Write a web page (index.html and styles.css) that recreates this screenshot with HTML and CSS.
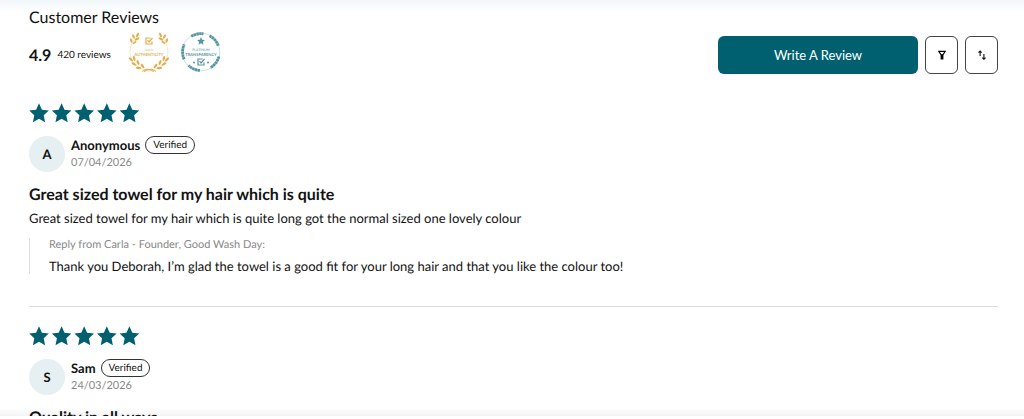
FILE: index.html
```html
<!DOCTYPE html>
<html lang="en">
<head>
    <meta charset="UTF-8">
    <meta name="viewport" content="width=device-width, initial-scale=1.0">
    <title>Customer Reviews</title>
    <link rel="stylesheet" href="styles.css">
</head>
<body>
    <!-- Shared shapes -->
    <svg class="shapes" aria-hidden="true">
        <symbol id="star" viewBox="0 0 20 20">
            <path d="M10 .3 12.9 6.7 19.8 7.5 14.7 12.3 16.1 19.2 10 15.8 3.9 19.2 5.3 12.3 .2 7.5 7.1 6.7Z"/>
        </symbol>
        <symbol id="stars" viewBox="0 0 111 20">
            <use href="#star" x="0" width="20" height="20"/>
            <use href="#star" x="22.6" width="20" height="20"/>
            <use href="#star" x="45.2" width="20" height="20"/>
            <use href="#star" x="67.8" width="20" height="20"/>
            <use href="#star" x="90.4" width="20" height="20"/>
        </symbol>
        <symbol id="laurel" viewBox="0 0 40 40">
            <path d="M5 8C-1 17 0 27 7 33Q12 38 25 39.500" fill="none" stroke="currentColor" stroke-width=".5" opacity=".6"/>
            <g fill="currentColor">
                <ellipse cx="8.500" cy="3" rx="2.600" ry="1.100" transform="rotate(-65 8.500 3)"/>
                <ellipse cx="4.500" cy="4.500" rx="2.400" ry="1.100" transform="rotate(65 4.500 4.500)"/>
                <ellipse cx="8" cy="7" rx="2.600" ry="1.200" transform="rotate(-25 8 7)"/>
                <ellipse cx="2.200" cy="8.500" rx="2.400" ry="1.100" transform="rotate(70 2.200 8.500)"/>
                <ellipse cx="5.500" cy="10.500" rx="2.200" ry="1" transform="rotate(-35 5.500 10.500)"/>
                <ellipse cx="2" cy="27.500" rx="2.600" ry="1.200" transform="rotate(45 2 27.500)"/>
                <ellipse cx="5.200" cy="26.500" rx="2.500" ry="1.200" transform="rotate(-105 5.200 26.500)"/>
                <ellipse cx="5" cy="32" rx="2.700" ry="1.200" transform="rotate(25 5 32)"/>
                <ellipse cx="9" cy="30.500" rx="2.600" ry="1.200" transform="rotate(-115 9 30.500)"/>
                <ellipse cx="9.500" cy="36" rx="2.700" ry="1.200" transform="rotate(5 9.500 36)"/>
                <ellipse cx="13.500" cy="34" rx="2.600" ry="1.200" transform="rotate(-130 13.500 34)"/>
            </g>
            <path d="M13 39.500Q17 36 21 37.500L25 39.500" fill="none" stroke="currentColor" stroke-width="1"/>
        </symbol>
        <symbol id="tick" viewBox="0 0 8 8">
            <path d="M5.500 1H1V7H7V4.500M2.500 3.200 4 5 7.500 1" fill="none" stroke="currentColor" stroke-width="1.200"/>
        </symbol>
    </svg>

    <main class="reviews">
        <h1 class="reviews-title">Customer Reviews</h1>

        <div class="summary">
            <strong class="score">4.9</strong>
            <span class="count">420 reviews</span>
            <svg class="badge badge-gold" viewBox="0 0 40 40" role="img" aria-label="Gold authenticity">
                <use href="#laurel" width="40" height="40"/>
                <use href="#laurel" width="40" height="40" transform="matrix(-1 0 0 1 40 0)"/>
                <use href="#tick" x="16" y="5" width="8" height="8"/>
                <text x="20" y="19" font-size="3">GOLD</text>
                <text class="badge-name" x="20" y="23.500" font-size="4">AUTHENTICITY</text>
            </svg>
            <svg class="badge badge-platinum" viewBox="0 0 40 40" role="img" aria-label="Platinum transparency">
                <circle cx="20" cy="20" r="18.800" fill="none" stroke="currentColor" stroke-width=".5" opacity=".6"/>
                <g fill="none" stroke="currentColor" stroke-width="2.800">
                    <path d="M10.200 4.400A18.400 18.400 0 0 1 22.500 1.800" stroke-dasharray="2.500 .3"/>
                    <path d="M28.500 3.700A18.400 18.400 0 0 1 37.300 13.700" stroke-dasharray="2.500 .3"/>
                    <path d="M37.900 24.500A18.400 18.400 0 0 1 29.500 35.700" stroke-dasharray="2.500 .3"/>
                    <path d="M19 38.400A18.400 18.400 0 0 1 7.500 33.500" stroke-dasharray="2.500 .3"/>
                    <path d="M3.100 27.400A18.400 18.400 0 0 1 3.300 12.300" stroke-dasharray="2.500 .3"/>
                </g>
                <use href="#star" x="16" y="5" width="8" height="8"/>
                <text x="20" y="18.500" font-size="3.500">PLATINUM</text>
                <text class="badge-name" x="20" y="23.500" font-size="4">TRANSPARENCY</text>
                <use href="#tick" x="16" y="26" width="8" height="8"/>
                <circle cx="13" cy="30.500" r="1"/>
                <circle cx="27" cy="30.500" r="1"/>
            </svg>
            <div class="actions">
                <button type="button" class="write-button">Write A Review</button>
                <button type="button" class="icon-button" aria-label="Filter reviews">
                    <svg class="icon" viewBox="0 0 10 10">
                        <path d="M.7.800H9.300L6.400 5.200V9.600H3.600V5.200ZM2.900 2.100 4.400 4.300H5.600L7.100 2.100Z" fill-rule="evenodd"/>
                    </svg>
                </button>
                <button type="button" class="icon-button" aria-label="Sort reviews">
                    <svg class="icon" viewBox="0 0 10 10">
                        <path d="M3.100 6V1.500M1.500 2.600 3.100 1 4.700 2.600M6.900 4V8.800M5.300 7.700 6.900 9.300 8.500 7.700" fill="none" stroke="currentColor" stroke-width="1.100"/>
                    </svg>
                </button>
            </div>
        </div>

        <!-- Review list -->
        <article class="review">
            <svg class="stars" role="img" aria-label="5 out of 5 stars"><use href="#stars"/></svg>
            <div class="author">
                <span class="avatar">A</span>
                <div>
                    <div class="author-line">
                        <strong class="author-name">Anonymous</strong>
                        <span class="verified">Verified</span>
                    </div>
                    <time class="date" datetime="2026-04-07">07/04/2026</time>
                </div>
            </div>
            <h2 class="review-title">Great sized towel for my hair which is quite</h2>
            <p class="review-text">Great sized towel for my hair which is quite long got the normal sized one lovely colour</p>
            <div class="reply">
                <p class="reply-from">Reply from Carla - Founder, Good Wash Day:</p>
                <p class="reply-text">Thank you Deborah, I’m glad the towel is a good fit for your long hair and that you like the colour too!</p>
            </div>
        </article>

        <article class="review">
            <svg class="stars" role="img" aria-label="5 out of 5 stars"><use href="#stars"/></svg>
            <div class="author">
                <span class="avatar">S</span>
                <div>
                    <div class="author-line">
                        <strong class="author-name">Sam</strong>
                        <span class="verified">Verified</span>
                    </div>
                    <time class="date" datetime="2026-03-24">24/03/2026</time>
                </div>
            </div>
            <h2 class="review-title">Quality in all ways</h2>
        </article>
    </main>
</body>
</html>
```
FILE: styles.css
```css
* {
    box-sizing: border-box;
}

body {
    margin: 0;
    overflow: hidden;
    font-family: Lato, sans-serif;
    font-size: 13px;
    text-rendering: geometricPrecision;
    color: #121212;
    background: #fff;
}

h1, h2, p {
    margin: 0;
}

.shapes {
    display: none;
}

.reviews {
    height: calc(100vh - 3px);
    padding: 8px 26px 0 29px;
    overflow: hidden;
    background:
        linear-gradient(#f0f7f9, #fff) top / 100% 12px no-repeat,
        linear-gradient(#fff, #f3f3f3) bottom / 100% 8px no-repeat;
}

.reviews-title {
    font-size: 16px;
    line-height: 20px;
    font-weight: 400;
}

/* Score, badges and buttons */
.summary {
    display: flex;
    align-items: center;
    height: 54px;
}

.score {
    font-size: 16px;
    margin-right: 6px;
}

.count {
    font-size: 10px;
    margin-right: 18px;
}

.badge {
    width: 40px;
    height: 40px;
    margin-right: 12px;
    margin-bottom: 6px;
    fill: currentColor;
}

.badge text {
    text-anchor: middle;
}

.badge-name {
    font-weight: 700;
}

.badge-gold {
    color: #e4ae4d;
}

.badge-platinum {
    color: #5696a2;
}

.actions {
    display: flex;
    flex: 1;
    justify-content: flex-end;
    gap: 7px;
}

.write-button, .icon-button {
    height: 38px;
    border-radius: 6px;
    font-family: inherit;
    cursor: pointer;
}

.write-button {
    width: 200px;
    border: none;
    background: #006070;
    color: #fff;
    font-size: 13px;
}

.icon-button {
    display: flex;
    align-items: center;
    justify-content: center;
    width: 33px;
    padding: 0;
    border: 1px solid #444;
    background: #fff;
    color: #121212;
}

.icon {
    width: 10px;
    height: 10px;
}

/* Reviews */
.review {
    padding-top: 21px;
}

.review + .review {
    margin-top: 32px;
    padding-top: 19px;
    border-top: 1px solid #ddd;
}

.stars {
    display: block;
    width: 111px;
    height: 20px;
    fill: #006070;
}

.author {
    display: flex;
    align-items: center;
    gap: 6px;
    margin-top: 13px;
}

.avatar {
    display: flex;
    align-items: center;
    justify-content: center;
    width: 36px;
    height: 36px;
    border-radius: 50%;
    background: #e6eff1;
    font-weight: 700;
}

.author-line {
    display: flex;
    align-items: center;
    gap: 5px;
    height: 18px;
}

.author-name {
    font-size: 13px;
}

.verified {
    padding: 0 7px;
    border: 1px solid #333;
    border-radius: 9px;
    font-size: 10px;
    line-height: 16px;
}

.date {
    display: block;
    font-size: 11px;
    line-height: 18px;
    color: #888;
}

.review-title {
    margin-top: 13px;
    font-size: 16px;
    line-height: 20px;
}

.review-text {
    margin-top: 4px;
    line-height: 18px;
}

.reply {
    margin-top: 11px;
    padding-left: 19px;
    border-left: 1px solid #ddd;
}

.reply-from {
    margin-bottom: 6px;
    font-size: 11px;
    line-height: 14px;
    color: #888;
}

.reply-text {
    line-height: 16px;
}
```
